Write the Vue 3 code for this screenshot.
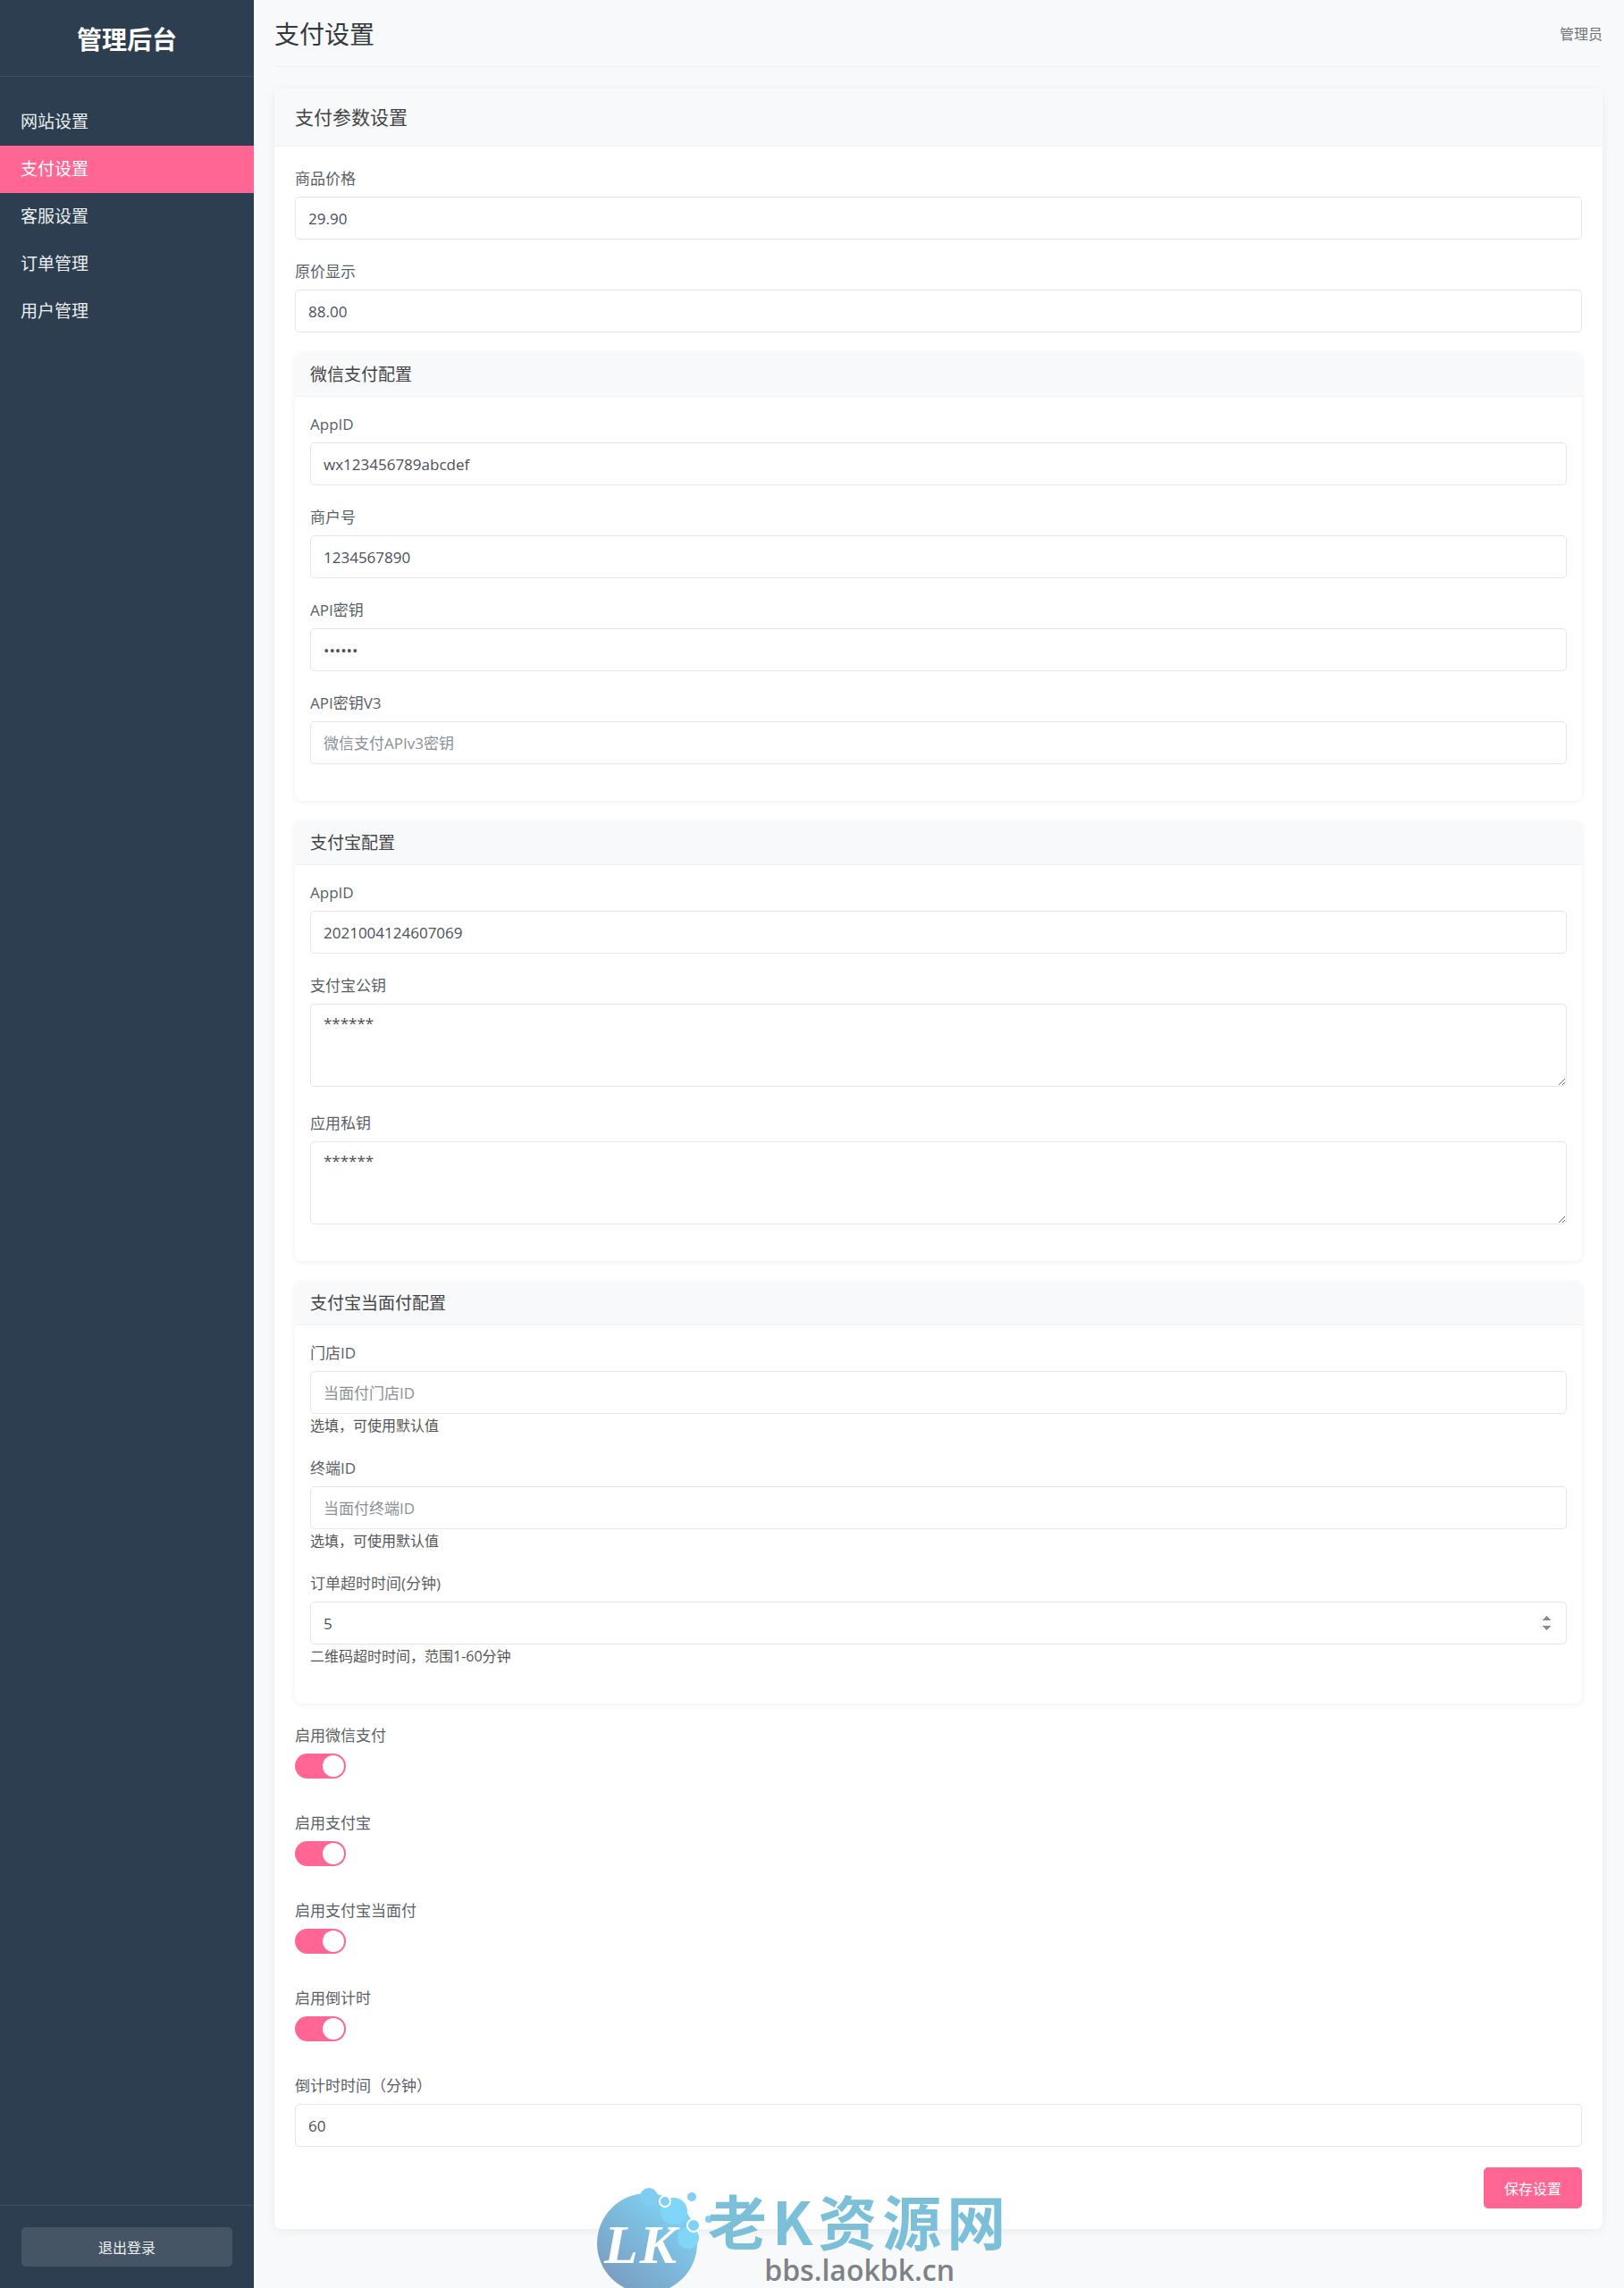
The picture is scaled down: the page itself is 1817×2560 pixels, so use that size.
<script setup>
const menu = ['网站设置', '支付设置', '客服设置', '订单管理', '用户管理']

const groups = [
  {
    title: '微信支付配置',
    fields: [
      { label: 'AppID', value: 'wx123456789abcdef' },
      { label: '商户号', value: '1234567890' },
      { label: 'API密钥', type: 'password', value: '123456' },
      { label: 'API密钥V3', placeholder: '微信支付APIv3密钥' }
    ]
  },
  {
    title: '支付宝配置',
    fields: [
      { label: 'AppID', value: '2021004124607069' },
      { label: '支付宝公钥', type: 'textarea', value: '******' },
      { label: '应用私钥', type: 'textarea', value: '******' }
    ]
  },
  {
    title: '支付宝当面付配置',
    fields: [
      { label: '门店ID', placeholder: '当面付门店ID', help: '选填，可使用默认值' },
      { label: '终端ID', placeholder: '当面付终端ID', help: '选填，可使用默认值' },
      { label: '订单超时时间(分钟)', type: 'number', value: '5', help: '二维码超时时间，范围1-60分钟' }
    ]
  }
]

const switches = ['启用微信支付', '启用支付宝', '启用支付宝当面付', '启用倒计时']
</script>

<template>
  <div class="layout">
    <aside class="sidebar">
      <div class="brand">管理后台</div>
      <nav class="menu">
        <a v-for="item in menu" :key="item" class="menu-item" :class="{ active: item === '支付设置' }">{{ item }}</a>
      </nav>
      <div class="sidebar-foot">
        <button class="logout">退出登录</button>
      </div>
    </aside>

    <main class="main">
      <header class="topbar">
        <h1>支付设置</h1>
        <span class="user">管理员</span>
      </header>

      <section class="card">
        <div class="card-head">支付参数设置</div>
        <div class="card-body">
          <div class="field">
            <label>商品价格</label>
            <input type="text" value="29.90" />
          </div>
          <div class="field">
            <label>原价显示</label>
            <input type="text" value="88.00" />
          </div>

          <div v-for="group in groups" :key="group.title" class="sub-card">
            <div class="sub-head">{{ group.title }}</div>
            <div class="sub-body">
              <div v-for="f in group.fields" :key="f.label" class="field">
                <label>{{ f.label }}</label>
                <textarea v-if="f.type === 'textarea'" :value="f.value"></textarea>
                <input v-else :type="f.type || 'text'" :value="f.value" :placeholder="f.placeholder" />
                <small v-if="f.help">{{ f.help }}</small>
              </div>
            </div>
          </div>

          <div v-for="name in switches" :key="name" class="field switch-field">
            <label>{{ name }}</label>
            <span class="switch"><span class="knob"></span></span>
          </div>

          <div class="field">
            <label>倒计时时间（分钟）</label>
            <input type="text" value="60" />
          </div>

          <div class="actions">
            <button class="save">保存设置</button>
          </div>
        </div>
      </section>
    </main>

    <div class="watermark">
      <svg class="wm-logo" width="130" height="125" viewBox="0 0 130 125">
        <defs>
          <linearGradient id="wmBlue" x1="0.9" y1="0.1" x2="0.2" y2="0.9">
            <stop offset="0" stop-color="#7fd6f8" />
            <stop offset="1" stop-color="#7a9fc2" />
          </linearGradient>
        </defs>
        <circle cx="62" cy="72" r="56" fill="url(#wmBlue)" />
        <circle cx="64" cy="20" r="10" fill="#7fcdf0" />
        <circle cx="92" cy="36" r="15" fill="#7fd6f8" />
        <circle cx="108" cy="66" r="12" fill="#7fd6f8" />
        <circle cx="82" cy="25" r="6" fill="#7fd0f4" stroke="#fff" stroke-width="2" />
        <circle cx="112" cy="20" r="5" fill="#7fd0f4" />
        <circle cx="114" cy="52" r="7" fill="#7fd0f4" stroke="#fff" stroke-width="2" />
        <circle cx="131" cy="45" r="4" fill="#7fd0f4" />
        <text x="14" y="94" class="wm-lk">LK</text>
      </svg>
      <div class="wm-text">
        <div class="wm-name">老K资源网</div>
        <div class="wm-url">bbs.laokbk.cn</div>
      </div>
    </div>
  </div>
</template>

<style>
body {
  background: #f8f9fa;
}
</style>

<style scoped>
.layout {
  position: relative;
  display: flex;
  height: 2560px;
  overflow: hidden;
  background: #f8f9fa;
  font-family: "Open Sans", "Noto Sans CJK SC", sans-serif;
  color: #495057;
}

.sidebar {
  width: 284px;
  flex-shrink: 0;
  display: flex;
  flex-direction: column;
  background: #2c3e50;
  color: #ecf0f1;
}

.brand {
  height: 85px;
  line-height: 88px;
  text-align: center;
  font-size: 28px;
  font-weight: 700;
  color: #fff;
  border-bottom: 1px solid #3c4f63;
}

.menu {
  flex: 1;
  padding-top: 24px;
}

.menu-item {
  display: block;
  height: 53px;
  line-height: 53px;
  padding-left: 23px;
  font-size: 19px;
  color: #ecf0f1;
}

.menu-item.active {
  background: #ff6694;
  color: #fff;
}

.sidebar-foot {
  height: 93px;
  padding: 24px 24px 0;
  box-sizing: border-box;
  border-top: 1px solid #3c4f63;
}

.logout {
  width: 100%;
  height: 44px;
  border: none;
  border-radius: 5px;
  background: #465565;
  color: #ecf0f1;
  font-family: inherit;
  font-size: 16px;
}

.main {
  flex: 1;
  min-width: 0;
  padding: 0 24px 0 23px;
}

.topbar {
  display: flex;
  justify-content: space-between;
  align-items: center;
  height: 74px;
  margin-bottom: 24px;
  border-bottom: 1px solid #eff1f3;
}

.topbar h1 {
  margin: 0;
  font-size: 28px;
  font-weight: 400;
  color: #343a40;
}

.user {
  font-size: 16px;
  color: #6c757d;
}

.card {
  border-radius: 8px;
  background: #fff;
  box-shadow: 0 2px 12px rgba(0, 0, 0, 0.06);
}

.card-head {
  height: 65px;
  line-height: 65px;
  padding: 0 23px;
  font-size: 21px;
  color: #444;
  background: #f8f9fa;
  border-bottom: 1px solid #f0f1f3;
  border-radius: 8px 8px 0 0;
  box-sizing: border-box;
}

.card-body {
  padding: 23px 23px 23px 23px;
}

.field {
  margin-bottom: 23px;
}

.field label {
  display: block;
  height: 33px;
  line-height: 25px;
  font-size: 17px;
  color: #5a5f66;
}

.field input,
.field textarea {
  display: block;
  width: 100%;
  box-sizing: border-box;
  border: 1px solid #e3e5e8;
  border-radius: 5px;
  padding: 0 14px;
  font-family: inherit;
  font-size: 17px;
  color: #495057;
  background: #fff;
}

.field input {
  height: 48px;
}

.field textarea {
  height: 93px;
  padding-top: 9px;
  margin-bottom: 28px;
}

.field input::placeholder {
  color: #8b9096;
}

.field input[type="number"]::-webkit-inner-spin-button {
  opacity: 1;
}

.field small {
  display: block;
  margin-top: 2px;
  height: 23px;
  line-height: 23px;
  font-size: 16px;
  color: #555;
}

.sub-card {
  margin-bottom: 23px;
  border-radius: 8px;
  background: #fff;
  box-shadow: 0 1px 6px rgba(0, 0, 0, 0.07);
}

.sub-head {
  height: 49px;
  line-height: 49px;
  padding: 0 17px;
  box-sizing: border-box;
  font-size: 19px;
  color: #444;
  background: #f8f9fa;
  border-bottom: 1px solid #f0f1f3;
  border-radius: 8px 8px 0 0;
}

.sub-body {
  padding: 18px 17px 18px;
}

.field:last-child textarea {
  margin-bottom: 5px;
}

.switch-field {
  margin-bottom: 37px;
}

.switch {
  display: block;
  position: relative;
  width: 57px;
  height: 28px;
  border-radius: 14px;
  background: #ff6694;
}

.knob {
  position: absolute;
  top: 2px;
  right: 2px;
  width: 24px;
  height: 24px;
  border-radius: 50%;
  background: #fff;
}

.actions {
  display: flex;
  justify-content: flex-end;
}

.save {
  width: 110px;
  height: 46px;
  border: none;
  border-radius: 5px;
  background: #ff6694;
  color: #fff;
  font-family: inherit;
  font-size: 16px;
}

.watermark {
  position: absolute;
  left: 662px;
  top: 2438px;
  display: flex;
  pointer-events: none;
}

.wm-logo {
  flex-shrink: 0;
  overflow: visible;
}

.wm-lk {
  font-family: "Liberation Serif", serif;
  font-weight: 700;
  font-style: italic;
  font-size: 62px;
  letter-spacing: 2px;
  fill: #fff;
}

.wm-text {
  margin-left: 0;
  text-align: center;
}

.wm-name {
  font-family: "Noto Sans CJK SC", sans-serif;
  font-weight: 700;
  font-size: 66px;
  line-height: 90px;
  letter-spacing: 6px;
  color: #7bbfd9;
  white-space: nowrap;
}

.wm-url {
  margin-top: -8px;
  font-family: "Open Sans", sans-serif;
  font-weight: 600;
  font-size: 32px;
  line-height: 40px;
  color: #7d8286;
}
</style>
